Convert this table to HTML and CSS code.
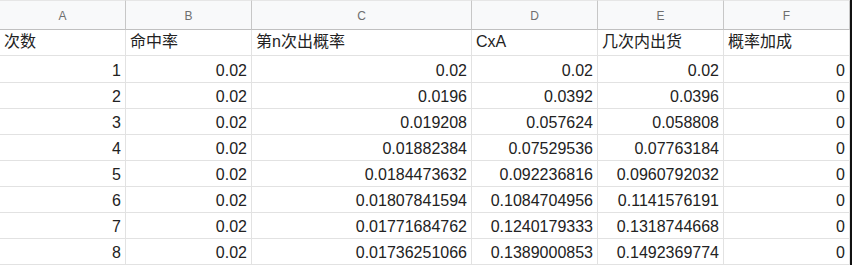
FILE: index.html
```html
<!DOCTYPE html>
<html lang="zh">
<head>
<meta charset="utf-8">
<title>Sheet</title>
<link rel="stylesheet" href="styles.css">
</head>
<body>
<div class="frame">
  <div class="sheet">
    <div class="ch">A</div><div class="ch">B</div><div class="ch">C</div><div class="ch">D</div><div class="ch">E</div><div class="ch">F</div>

    <div class="c t r1">次数</div><div class="c t r1">命中率</div><div class="c t r1">第n次出概率</div><div class="c t r1">CxA</div><div class="c t r1">几次内出货</div><div class="c t r1">概率加成</div>

    <div class="c n">1</div><div class="c n">0.02</div><div class="c n">0.02</div><div class="c n">0.02</div><div class="c n">0.02</div><div class="c n">0</div>
    <div class="c n">2</div><div class="c n">0.02</div><div class="c n">0.0196</div><div class="c n">0.0392</div><div class="c n">0.0396</div><div class="c n">0</div>
    <div class="c n">3</div><div class="c n">0.02</div><div class="c n">0.019208</div><div class="c n">0.057624</div><div class="c n">0.058808</div><div class="c n">0</div>
    <div class="c n">4</div><div class="c n">0.02</div><div class="c n">0.01882384</div><div class="c n">0.07529536</div><div class="c n">0.07763184</div><div class="c n">0</div>
    <div class="c n">5</div><div class="c n">0.02</div><div class="c n">0.0184473632</div><div class="c n">0.092236816</div><div class="c n">0.0960792032</div><div class="c n">0</div>
    <div class="c n">6</div><div class="c n">0.02</div><div class="c n">0.01807841594</div><div class="c n">0.1084704956</div><div class="c n">0.1141576191</div><div class="c n">0</div>
    <div class="c n">7</div><div class="c n">0.02</div><div class="c n">0.01771684762</div><div class="c n">0.1240179333</div><div class="c n">0.1318744668</div><div class="c n">0</div>
    <div class="c n">8</div><div class="c n">0.02</div><div class="c n">0.01736251066</div><div class="c n">0.1389000853</div><div class="c n">0.1492369774</div><div class="c n">0</div>
  </div>
  <div class="edge"></div>
</div>
</body>
</html>
```
FILE: styles.css
```css
html, body {
  margin: 0;
  padding: 0;
  background: #ffffff;
}
body {
  width: 852px;
  height: 265px;
  overflow: hidden;
  font-family: "Liberation Sans", Arial, "Noto Sans CJK SC", sans-serif;
  color: #222222;
}
.frame {
  display: flex;
  width: 852px;
  height: 265px;
}
.sheet {
  display: grid;
  grid-template-columns: 126px 126px 220px 126px 126px 126px;
  grid-template-rows: 30px 26px 27px 26px 26px 26px 26px 26px 26px 26px;
  width: 850px;
  flex: none;
}
.edge {
  flex: 1;
  background: #111111;
}
.ch {
  box-sizing: border-box;
  background: #f8f9fa;
  border-right: 1px solid #c7c7c7;
  border-bottom: 1px solid #c0c0c0;
  border-top: 1px solid #e6e6e6;
  color: #6f6f6f;
  font-size: 12px;
  display: flex;
  align-items: center;
  justify-content: center;
  padding-top: 1px;
}
.c {
  box-sizing: border-box;
  border-right: 1px solid #e2e2e2;
  border-bottom: 1px solid #e2e2e2;
  font-size: 16px;
  line-height: 18px;
  display: flex;
  align-items: flex-end;
  padding: 0 4px 4px 5px;
  white-space: nowrap;
}
.n {
  justify-content: flex-end;
  padding-bottom: 2px;
}
.t {
  justify-content: flex-start;
  padding-left: 4px;
  font-family: "Liberation Sans", "Noto Sans CJK SC", sans-serif;
}
```
